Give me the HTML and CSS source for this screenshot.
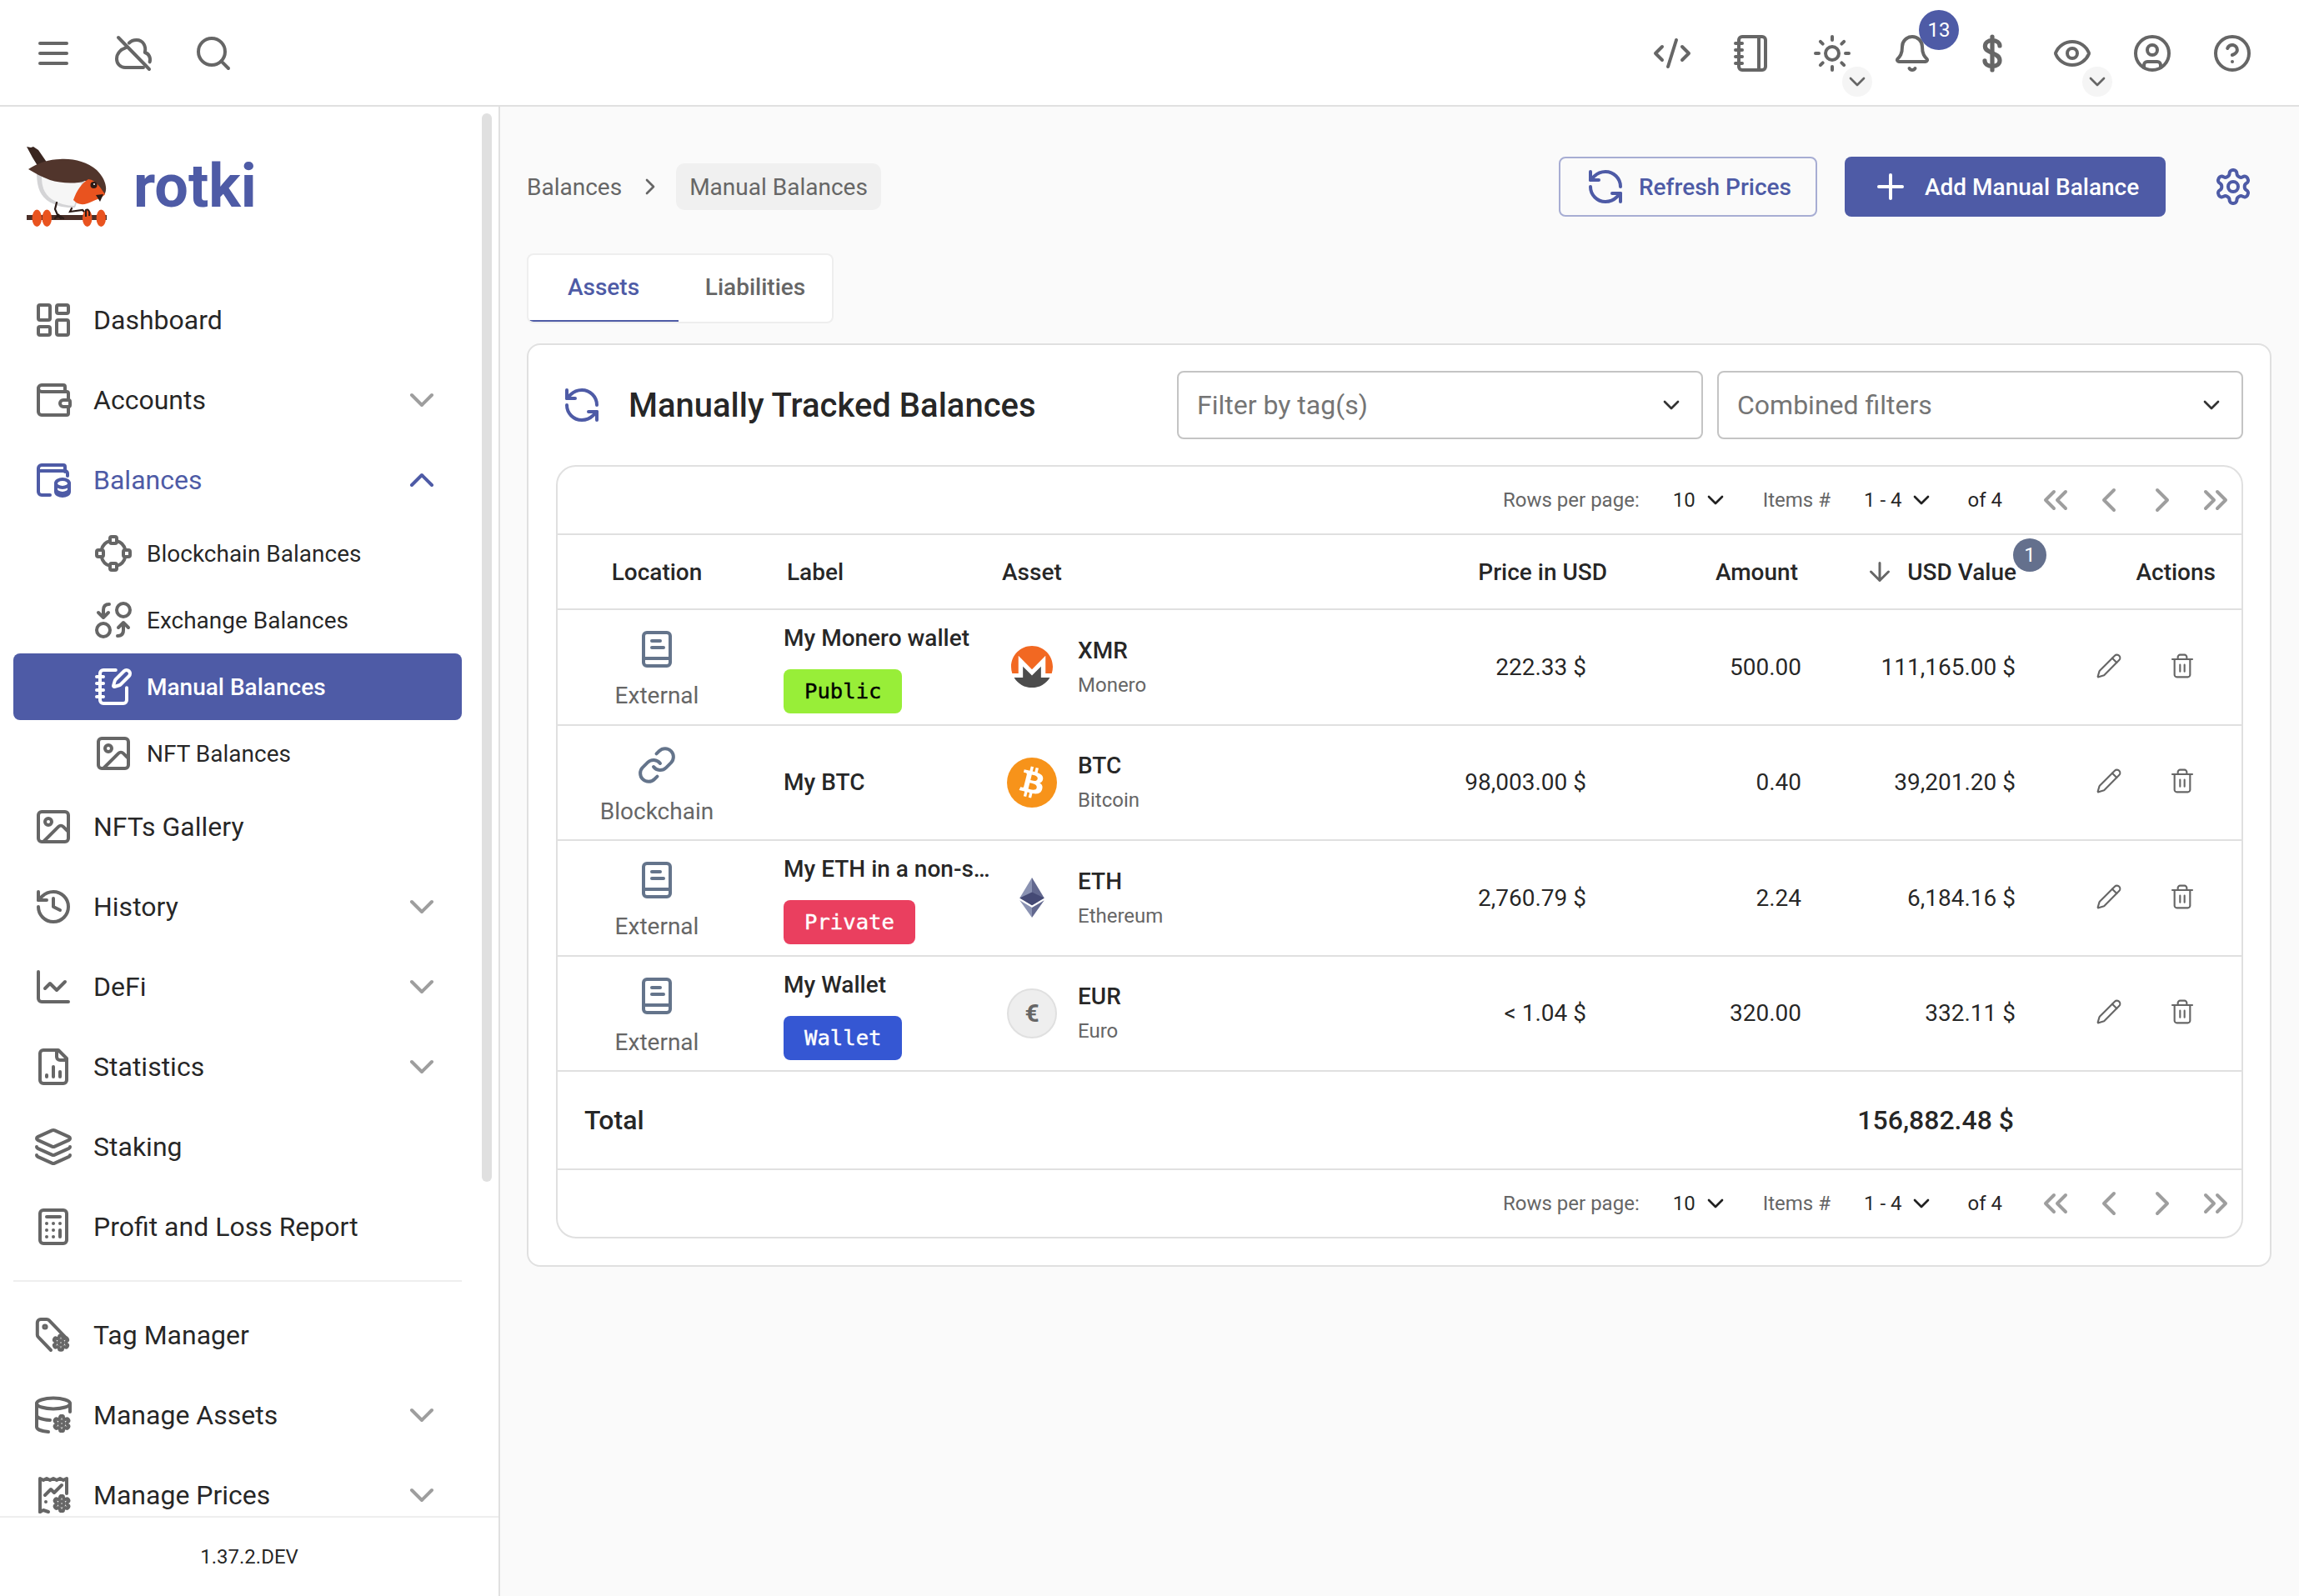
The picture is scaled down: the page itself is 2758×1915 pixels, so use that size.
FILE: index.html
```html
<!DOCTYPE html>
<html lang="en">
<head>
<meta charset="utf-8">
<title>rotki</title>
<link rel="stylesheet" href="styles.css">
</head>
<body>
<svg class="sprite" aria-hidden="true">
<defs>
<symbol id="i-down" viewBox="0 0 24 24"><path d="m6 9 6 6 6-6"/></symbol>
<symbol id="i-up" viewBox="0 0 24 24"><path d="m18 15-6-6-6 6"/></symbol>
<symbol id="i-left" viewBox="0 0 24 24"><path d="m15 18-6-6 6-6"/></symbol>
<symbol id="i-right" viewBox="0 0 24 24"><path d="m9 18 6-6-6-6"/></symbol>
<symbol id="i-dleft" viewBox="0 0 24 24"><path d="m11 17-5-5 5-5"/><path d="m18 17-5-5 5-5"/></symbol>
<symbol id="i-dright" viewBox="0 0 24 24"><path d="m6 17 5-5-5-5"/><path d="m13 17 5-5-5-5"/></symbol>
<symbol id="i-refresh" viewBox="0 0 24 24"><path d="M21 12a9 9 0 0 0-9-9 9.75 9.75 0 0 0-6.74 2.74L3 8"/><path d="M3 3v5h5"/><path d="M3 12a9 9 0 0 0 9 9 9.75 9.75 0 0 0 6.74-2.74L21 16"/><path d="M16 16h5v5"/></symbol>
<symbol id="i-gear" viewBox="0 0 24 24"><path d="M12.22 2h-.44a2 2 0 0 0-2 2v.18a2 2 0 0 1-1 1.73l-.43.25a2 2 0 0 1-2 0l-.15-.08a2 2 0 0 0-2.73.73l-.22.38a2 2 0 0 0 .73 2.73l.15.1a2 2 0 0 1 1 1.72v.51a2 2 0 0 1-1 1.74l-.15.09a2 2 0 0 0-.73 2.73l.22.38a2 2 0 0 0 2.73.73l.15-.08a2 2 0 0 1 2 0l.43.25a2 2 0 0 1 1 1.73V20a2 2 0 0 0 2 2h.44a2 2 0 0 0 2-2v-.18a2 2 0 0 1 1-1.73l.43-.25a2 2 0 0 1 2 0l.15.08a2 2 0 0 0 2.73-.73l.22-.39a2 2 0 0 0-.73-2.73l-.15-.08a2 2 0 0 1-1-1.74v-.5a2 2 0 0 1 1-1.74l.15-.09a2 2 0 0 0 .73-2.73l-.22-.38a2 2 0 0 0-2.73-.73l-.15.08a2 2 0 0 1-2 0l-.43-.25a2 2 0 0 1-1-1.73V4a2 2 0 0 0-2-2z"/><circle cx="12" cy="12" r="3"/></symbol>
<symbol id="i-book" viewBox="0 0 24 24"><path d="M4 20V4a2 2 0 0 1 2-2h12a2 2 0 0 1 2 2v16a2 2 0 0 1-2 2H6a2 2 0 0 1-2-2Z"/><path d="M4 17.5h16"/><path d="M9 7h5"/><path d="M9 11h7"/></symbol>
<symbol id="i-link" viewBox="0 0 24 24"><path d="M10 13a5 5 0 0 0 7.54.54l3-3a5 5 0 0 0-7.07-7.07l-1.72 1.71"/><path d="M14 11a5 5 0 0 0-7.54-.54l-3 3a5 5 0 0 0 7.07 7.07l1.71-1.71"/></symbol>
<symbol id="i-pencil" viewBox="0 0 24 24"><path d="M21.174 6.812a1 1 0 0 0-3.986-3.987L3.842 16.174a2 2 0 0 0-.5.83l-1.321 4.352a.5.5 0 0 0 .623.622l4.353-1.32a2 2 0 0 0 .83-.497z"/><path d="m15 5 4 4"/></symbol>
<symbol id="i-trash" viewBox="0 0 24 24"><path d="M3 6h18"/><path d="M19 6v14c0 1-1 2-2 2H7c-1 0-2-1-2-2V6"/><path d="M8 6V4c0-1 1-2 2-2h4c1 0 2 1 2 2v2"/><path d="M10 11v6"/><path d="M14 11v6"/></symbol>
<symbol id="i-image" viewBox="0 0 24 24"><rect x="3" y="3" width="18" height="18" rx="2"/><circle cx="9" cy="9" r="2"/><path d="m21 15-3.086-3.086a2 2 0 0 0-2.828 0L6 21"/></symbol>
</defs>
</svg>

<header class="topbar">
  <div class="topbar-group">
    <span class="top-btn"><svg class="ico i48" viewBox="0 0 24 24"><path d="M4 6h16"/><path d="M4 12h16"/><path d="M4 18h16"/></svg></span>
    <span class="top-btn"><svg class="ico i48" viewBox="0 0 24 24"><path d="m3 2.5 18.5 19"/><path d="M7.6 8.6C4.4 9.6 2 12 2 15.4c0 3 2.4 5.1 5 5.1h11"/><path d="M21.8 17.2c.8-2.6-.6-5.1-2.9-5.7.9-3.7-1-7.5-5-7.5-1.9 0-3.4.6-4.5 1.8"/></svg></span>
    <span class="top-btn"><svg class="ico i48" viewBox="0 0 24 24"><circle cx="11" cy="11" r="8"/><path d="m21 21-4.3-4.3"/></svg></span>
  </div>
  <div class="topbar-group">
    <span class="top-btn"><svg class="ico i48" viewBox="0 0 24 24"><path d="m18 16 4-4-4-4"/><path d="m6 8-4 4 4 4"/><path d="m14.5 4-5 16"/></svg></span>
    <span class="top-btn"><svg class="ico i48" viewBox="0 0 24 24"><path d="M2 6h4"/><path d="M2 10h4"/><path d="M2 14h4"/><path d="M2 18h4"/><rect x="4" y="2" width="16" height="20" rx="2"/><path d="M16 2v20"/></svg></span>
    <span class="top-btn"><svg class="ico i48" viewBox="0 0 24 24"><circle cx="12" cy="12" r="4"/><path d="M12 2v2"/><path d="M12 20v2"/><path d="m4.93 4.93 1.41 1.41"/><path d="m17.66 17.66 1.41 1.41"/><path d="M2 12h2"/><path d="M20 12h2"/><path d="m6.34 17.66-1.41 1.41"/><path d="m19.07 4.93-1.41 1.41"/></svg><span class="mini-drop"><svg class="ico i32"><use href="#i-down"/></svg></span></span>
    <span class="top-btn"><svg class="ico i48" viewBox="0 0 24 24"><path d="M10.268 21a2 2 0 0 0 3.464 0"/><path d="M3.262 15.326A1 1 0 0 0 4 17h16a1 1 0 0 0 .74-1.673C19.41 13.956 18 12.499 18 8A6 6 0 0 0 6 8c0 4.499-1.411 5.956-2.738 7.326"/></svg><span class="notif-badge">13</span></span>
    <span class="top-btn"><svg class="ico i48 heavy" viewBox="0 0 24 24"><path d="M12 2v20"/><path d="M16.5 7.5c0-2-1.9-3.2-4.5-3.2s-4.3 1.3-4.3 3.4c0 4.6 8.8 3.6 8.8 8.5 0 2.2-1.9 3.5-4.5 3.5s-4.5-1.2-4.5-3.3"/></svg></span>
    <span class="top-btn"><svg class="ico i48" viewBox="0 0 24 24"><path d="M2.062 12.348a1 1 0 0 1 0-.696 10.75 10.75 0 0 1 19.876 0 1 1 0 0 1 0 .696 10.75 10.75 0 0 1-19.876 0"/><circle cx="12" cy="12" r="3"/></svg><span class="mini-drop"><svg class="ico i32"><use href="#i-down"/></svg></span></span>
    <span class="top-btn"><svg class="ico i48" viewBox="0 0 24 24"><circle cx="12" cy="12" r="10"/><circle cx="12" cy="10" r="3"/><path d="M7 20.662V19a2 2 0 0 1 2-2h6a2 2 0 0 1 2 2v1.662"/></svg></span>
    <span class="top-btn"><svg class="ico i48" viewBox="0 0 24 24"><circle cx="12" cy="12" r="10"/><path d="M9.09 9a3 3 0 0 1 5.83 1c0 2-3 3-3 3"/><path d="M12 17h.01"/></svg></span>
  </div>
</header>

<div class="shell">
  <aside class="sidebar">
    <div class="side-scroll">
      <div class="brand">
        <svg class="bird" viewBox="0 0 96 96">
          <path fill="#3a2620" d="M0 0 5 1 8 0 14 4 25 20 15 26 7 13Z"/>
          <path fill="#d4d4d6" d="M12 30C12 44 14 56 24 64 34 71 46 74 58 73L70 40Z"/>
          <path fill="#f6f6f6" d="M18 36C18 46 20 56 30 63 38 68 48 71 57 71L66 44Z"/>
          <path fill="#51352c" d="M2 27C14 19 28 15 40 15 56 14 72 18 84 28 94 38 98 50 93 58 86 50 78 42 70 41 60 45 40 44 28 40 18 36 10 32 2 27Z"/>
          <path fill="#e9531f" d="M56 64C60 52 66 44 74 39 84 40 90 52 94 57 90 62 84 63 78 66 70 70 62 71 56 64Z"/>
          <path fill="#2b1b17" d="M83 58 92 57 88 66Z"/>
          <circle cx="80.5" cy="46" r="4" fill="#2b1b17"/><circle cx="81" cy="45" r="1" fill="#fff"/>
          <rect x="0" y="82" width="96" height="6" fill="#4a2f28"/>
          <g fill="none" stroke="#2b1b17" stroke-width="2.2" stroke-linecap="round"><path d="M36 67 34 75 38 84"/><path d="M34 86 38 82 41 86"/><path d="M38 82 44 86"/><path d="M54 74 52 78 67 76 73 82"/></g>
          <g fill="#e9531f"><ellipse cx="12.3" cy="85.7" rx="5.7" ry="10.3"/><ellipse cx="24.3" cy="85.7" rx="5.7" ry="10.3"/><ellipse cx="72.7" cy="85.7" rx="5.7" ry="10.3"/><ellipse cx="89.3" cy="85.7" rx="5.7" ry="10.3"/></g>
          <path fill="none" stroke="#2b1b17" stroke-width="2" d="M71 84V76C74 74 76 78 75 83"/>
        </svg>
        <span class="brand-name">rotki</span>
      </div>
      <nav class="nav">
        <a class="nav-item"><svg class="ico i48" viewBox="0 0 24 24"><rect x="3" y="3" width="7" height="9" rx="1"/><rect x="14" y="3" width="7" height="5" rx="1"/><rect x="14" y="12" width="7" height="9" rx="1"/><rect x="3" y="16" width="7" height="5" rx="1"/></svg><span class="nav-label">Dashboard</span></a>
        <a class="nav-item"><svg class="ico i48" viewBox="0 0 24 24"><path d="M19 7V4a1 1 0 0 0-1-1H5a2 2 0 0 0 0 4h15a1 1 0 0 1 1 1v4h-3a2 2 0 0 0 0 4h3a1 1 0 0 0 1-1v-2a1 1 0 0 0-1-1"/><path d="M3 5v14a2 2 0 0 0 2 2h15a1 1 0 0 0 1-1v-4"/></svg><span class="nav-label">Accounts</span><svg class="ico i48 caret"><use href="#i-down"/></svg></a>
        <a class="nav-item is-open"><svg class="ico i48" viewBox="0 0 24 24"><path d="M19 7V4a1 1 0 0 0-1-1H5a2 2 0 0 0-2 2v14a2 2 0 0 0 2 2h5"/><path d="M3 6.5h16a1.5 1.5 0 0 1 1.5 1.5v1.5"/><ellipse cx="17.5" cy="14" rx="4" ry="2.5"/><path d="M13.5 14v5c0 1.4 1.8 2.5 4 2.5s4-1.1 4-2.5v-5"/><path d="M13.5 17.5c0 1.4 1.8 2.5 4 2.5s4-1.1 4-2.5"/></svg><span class="nav-label">Balances</span><svg class="ico i48 caret"><use href="#i-up"/></svg></a>
        <a class="nav-sub"><svg class="ico i48" viewBox="0 0 24 24"><rect x="10" y="2" width="4" height="4" rx="1"/><rect x="18" y="10" width="4" height="4" rx="1"/><rect x="10" y="18" width="4" height="4" rx="1"/><rect x="2" y="10" width="4" height="4" rx="1"/><path d="M14 4.5c2.4.6 4.5 2.7 5.2 5.5"/><path d="M19.2 14c-.7 2.8-2.8 4.9-5.2 5.5"/><path d="M10 19.5c-2.4-.6-4.5-2.7-5.2-5.5"/><path d="M4.8 10c.7-2.8 2.8-4.900 5.2-5.500"/></svg><span class="nav-label">Blockchain Balances</span></a>
        <a class="nav-sub"><svg class="ico i48" viewBox="0 0 24 24"><circle cx="18" cy="6" r="4"/><circle cx="6" cy="18" r="4"/><path d="M9.5 2.5C7 2.5 6 4 6 6v4"/><path d="M3 7.5 6 10.5 9 7.5"/><path d="M14.5 21.5c2.500 0 3.500-1.500 3.500-3.500v-4"/><path d="M15 16.5 18 13.5 21 16.5"/></svg><span class="nav-label">Exchange Balances</span></a>
        <a class="nav-sub is-active"><svg class="ico i48" viewBox="0 0 24 24"><path d="M13.4 2H6a2 2 0 0 0-2 2v16a2 2 0 0 0 2 2h12a2 2 0 0 0 2-2v-7.4"/><path d="M2 6h4"/><path d="M2 10h4"/><path d="M2 14h4"/><path d="M2 18h4"/><path d="M21.378 5.626a1 1 0 1 0-3.004-3.004l-5.01 5.012a2 2 0 0 0-.506.854l-.837 2.87a.5.5 0 0 0 .62.62l2.87-.837a2 2 0 0 0 .854-.506z"/></svg><span class="nav-label">Manual Balances</span></a>
        <a class="nav-sub"><svg class="ico i48"><use href="#i-image"/></svg><span class="nav-label">NFT Balances</span></a>
        <a class="nav-item"><svg class="ico i48"><use href="#i-image"/></svg><span class="nav-label">NFTs Gallery</span></a>
        <a class="nav-item"><svg class="ico i48" viewBox="0 0 24 24"><path d="M3 12a9 9 0 1 0 9-9 9.75 9.75 0 0 0-6.74 2.74L3 8"/><path d="M3 3v5h5"/><path d="M12 7v5l4 2"/></svg><span class="nav-label">History</span><svg class="ico i48 caret"><use href="#i-down"/></svg></a>
        <a class="nav-item"><svg class="ico i48" viewBox="0 0 24 24"><path d="M3 3v16a2 2 0 0 0 2 2h16"/><path d="m19 9-5 5-4-4-3 3"/></svg><span class="nav-label">DeFi</span><svg class="ico i48 caret"><use href="#i-down"/></svg></a>
        <a class="nav-item"><svg class="ico i48" viewBox="0 0 24 24"><path d="M15 2H6a2 2 0 0 0-2 2v16a2 2 0 0 0 2 2h12a2 2 0 0 0 2-2V7Z"/><path d="M14 2v4a2 2 0 0 0 2 2h4"/><path d="M8 18v-1"/><path d="M12 18v-6"/><path d="M16 18v-3"/></svg><span class="nav-label">Statistics</span><svg class="ico i48 caret"><use href="#i-down"/></svg></a>
        <a class="nav-item"><svg class="ico i48" viewBox="0 0 24 24"><path d="M12.83 2.18a2 2 0 0 0-1.66 0L2.6 6.08a1 1 0 0 0 0 1.83l8.58 3.91a2 2 0 0 0 1.66 0l8.58-3.9a1 1 0 0 0 0-1.83z"/><path d="M2 12a1 1 0 0 0 .58.91l8.6 3.91a2 2 0 0 0 1.65 0l8.58-3.9A1 1 0 0 0 22 12"/><path d="M2 17a1 1 0 0 0 .58.91l8.6 3.91a2 2 0 0 0 1.65 0l8.58-3.9A1 1 0 0 0 22 17"/></svg><span class="nav-label">Staking</span></a>
        <a class="nav-item"><svg class="ico i48" viewBox="0 0 24 24"><rect x="4" y="2" width="16" height="20" rx="2"/><path d="M8 6h8"/><path d="M16 14v4"/><path d="M16 10h.01"/><path d="M12 10h.01"/><path d="M8 10h.01"/><path d="M12 14h.01"/><path d="M8 14h.01"/><path d="M12 18h.01"/><path d="M8 18h.01"/></svg><span class="nav-label">Profit and Loss Report</span></a>
        <hr class="nav-rule">
        <a class="nav-item"><svg class="ico i48" viewBox="0 0 24 24"><path d="M10.5 21 3 13.2a2 2 0 0 1-.6-1.4V4.5a2 2 0 0 1 2-2h3.6a2 2 0 0 1 1.4.6l10 10.3"/><circle cx="7" cy="7" r=".8"/><g class="mini-gear" transform="translate(11.1 11.1) scale(.45)"><use href="#i-gear" width="24" height="24"/></g></svg><span class="nav-label">Tag Manager</span></a>
        <a class="nav-item"><svg class="ico i48" viewBox="0 0 24 24"><ellipse cx="12" cy="5" rx="10" ry="3.2"/><path d="M2 5v14c0 1.5 3 2.7 7 3"/><path d="M22 5v5"/><path d="M2 12c0 1.5 3 2.7 8 3"/><g class="mini-gear" transform="translate(11.5 11.5) scale(.46)"><use href="#i-gear" width="24" height="24"/></g></svg><span class="nav-label">Manage Assets</span><svg class="ico i48 caret"><use href="#i-down"/></svg></a>
        <a class="nav-item"><svg class="ico i48" viewBox="0 0 24 24"><path d="M4 22V2l2 1 2-1 2 1 2-1 2 1 2-1 2 1 2-1v9"/><path d="M4 22l2-1 3 1"/><path d="m7 12 3.5-3.5 2 2L17 6"/><path d="M7.5 16v.01"/><g class="mini-gear" transform="translate(11.5 11.5) scale(.46)"><use href="#i-gear" width="24" height="24"/></g></svg><span class="nav-label">Manage Prices</span><svg class="ico i48 caret"><use href="#i-down"/></svg></a>
      </nav>
      <span class="side-thumb"></span>
    </div>
    <footer class="side-foot">1.37.2.DEV</footer>
  </aside>

  <main class="main">
    <div class="crumb-row">
      <div class="crumbs">
        <span>Balances</span>
        <svg class="ico i32"><use href="#i-right"/></svg>
        <span class="crumb-chip">Manual Balances</span>
      </div>
      <div class="crumb-actions">
        <button class="btn btn-outline"><svg class="ico i48"><use href="#i-refresh"/></svg>Refresh Prices</button>
        <button class="btn btn-solid"><svg class="ico i48" viewBox="0 0 24 24"><path d="M5 12h14"/><path d="M12 5v14"/></svg>Add Manual Balance</button>
        <span class="gear-btn"><svg class="ico i48"><use href="#i-gear"/></svg></span>
      </div>
    </div>

    <div class="tabs">
      <span class="tab is-current">Assets</span>
      <span class="tab">Liabilities</span>
    </div>

    <section class="card">
      <div class="card-head">
        <div class="card-title"><svg class="ico i48"><use href="#i-refresh"/></svg><h1>Manually Tracked Balances</h1></div>
        <div class="filters">
          <div class="select"><span>Filter by tag(s)</span><svg class="ico i32"><use href="#i-down"/></svg></div>
          <div class="select"><span>Combined filters</span><svg class="ico i32"><use href="#i-down"/></svg></div>
        </div>
      </div>

      <div class="table-box">
        <div class="pager">
          <span class="pager-label rows-label">Rows per page:</span>
          <span class="pager-val rows"><span>10</span><svg class="ico i32"><use href="#i-down"/></svg></span>
          <span class="pager-label items">Items #</span>
          <span class="pager-val range"><span>1 - 4</span><svg class="ico i32"><use href="#i-down"/></svg></span>
          <span class="pager-of">of 4</span>
          <span class="pager-nav"><svg class="ico i48"><use href="#i-dleft"/></svg><svg class="ico i48"><use href="#i-left"/></svg><svg class="ico i48"><use href="#i-right"/></svg><svg class="ico i48"><use href="#i-dright"/></svg></span>
        </div>
        <table class="grid">
          <colgroup><col class="c-loc"><col class="c-label"><col class="c-asset"><col class="c-price"><col class="c-amount"><col class="c-value"><col class="c-actions"></colgroup>
          <thead>
            <tr>
              <th class="h-loc">Location</th>
              <th class="h-label">Label</th>
              <th class="h-asset">Asset</th>
              <th class="h-price">Price in USD</th>
              <th class="h-amount">Amount</th>
              <th class="h-value"><span class="sort-wrap"><svg class="ico i36" viewBox="0 0 36 36"><path d="M18 7.5v21M28.5 18 18 28.5 7.5 18"/></svg>USD Value<span class="sort-badge">1</span></span></th>
              <th class="h-actions">Actions</th>
            </tr>
          </thead>
          <tbody>
            <tr>
              <td class="loc"><svg class="ico i48 slate"><use href="#i-book"/></svg><span>External</span></td>
              <td class="label"><div class="label-name">My Monero wallet</div><span class="tag tag-public">Public</span></td>
              <td><div class="asset"><span class="asset-ico"><svg class="coin-xmr" viewBox="0 0 24 24"><path fill="#f26822" d="M12 0C5.373 0 0 5.373 0 12c0 1.325.215 2.6.612 3.791h3.588V5.698L12 13.5l7.8-7.802v10.093h3.588A12 12 0 0 0 24 12c0-6.627-5.373-12-12-12z"/><path fill="#4c4c4c" d="M10.207 15.29 6.8 11.883v6.346H1.7a12 12 0 0 0 20.6 0h-5.1v-6.346l-3.407 3.407L12 17.083z"/></svg></span><div><div class="asset-sym">XMR</div><div class="asset-name">Monero</div></div></div></td>
              <td class="num">222.33 $</td><td class="num">500.00</td><td class="num">111,165.00 $</td>
              <td class="acts"><svg class="ico i32 thin"><use href="#i-pencil"/></svg><svg class="ico i32 thin"><use href="#i-trash"/></svg></td>
            </tr>
            <tr>
              <td class="loc"><svg class="ico i48 slate"><use href="#i-link"/></svg><span>Blockchain</span></td>
              <td class="label"><div class="label-name solo">My BTC</div></td>
              <td><div class="asset"><span class="asset-ico"><svg class="coin" viewBox="0 0 64 64"><circle cx="32" cy="32" r="32" fill="#f7931a"/><path fill="#fff" d="M46.103 27.444c.637-4.258-2.605-6.547-7.038-8.074l1.438-5.768-3.511-.875-1.4 5.616c-.923-.23-1.871-.447-2.813-.662l1.41-5.653-3.509-.875-1.439 5.766c-.764-.174-1.514-.346-2.242-.527l.004-.018-4.842-1.209-.934 3.75s2.605.597 2.55.634c1.422.355 1.679 1.296 1.636 2.042l-1.638 6.571c.098.025.225.061.365.117l-.371-.092-2.296 9.205c-.174.432-.615 1.08-1.609.834.035.051-2.552-.637-2.552-.637l-1.743 4.019 4.569 1.139c.85.213 1.683.436 2.503.646l-1.453 5.834 3.507.875 1.439-5.772c.958.26 1.888.5 2.798.726l-1.434 5.745 3.511.875 1.453-5.823c5.987 1.133 10.489.676 12.384-4.739 1.527-4.36-.076-6.875-3.226-8.515 2.294-.529 4.022-2.038 4.483-5.155zm-8.022 11.249c-1.085 4.36-8.426 2.003-10.806 1.412l1.928-7.729c2.38.594 10.012 1.77 8.878 6.317zm1.086-11.312c-.99 3.966-7.1 1.951-9.082 1.457l1.748-7.01c1.982.494 8.365 1.416 7.334 5.553z"/></svg></span><div><div class="asset-sym">BTC</div><div class="asset-name">Bitcoin</div></div></div></td>
              <td class="num">98,003.00 $</td><td class="num">0.40</td><td class="num">39,201.20 $</td>
              <td class="acts"><svg class="ico i32 thin"><use href="#i-pencil"/></svg><svg class="ico i32 thin"><use href="#i-trash"/></svg></td>
            </tr>
            <tr>
              <td class="loc"><svg class="ico i48 slate"><use href="#i-book"/></svg><span>External</span></td>
              <td class="label"><div class="label-name">My ETH in a non-s…</div><span class="tag tag-private">Private</span></td>
              <td><div class="asset"><span class="asset-ico"><svg class="coin-eth" viewBox="0 0 256 417"><polygon fill="#8a92b2" points="128,0 0,212 128,288"/><polygon fill="#62688f" points="128,0 256,212 128,288"/><polygon fill="#454a75" points="128,153 0,212 128,288 256,212"/><polygon fill="#8a92b2" points="0,236 128,417 128,312"/><polygon fill="#62688f" points="256,236 128,417 128,312"/></svg></span><div><div class="asset-sym">ETH</div><div class="asset-name">Ethereum</div></div></div></td>
              <td class="num">2,760.79 $</td><td class="num">2.24</td><td class="num">6,184.16 $</td>
              <td class="acts"><svg class="ico i32 thin"><use href="#i-pencil"/></svg><svg class="ico i32 thin"><use href="#i-trash"/></svg></td>
            </tr>
            <tr>
              <td class="loc"><svg class="ico i48 slate"><use href="#i-book"/></svg><span>External</span></td>
              <td class="label"><div class="label-name">My Wallet</div><span class="tag tag-wallet">Wallet</span></td>
              <td><div class="asset"><span class="asset-ico"><span class="coin-eur">€</span></span><div><div class="asset-sym">EUR</div><div class="asset-name">Euro</div></div></div></td>
              <td class="num">&lt; 1.04 $</td><td class="num">320.00</td><td class="num">332.11 $</td>
              <td class="acts"><svg class="ico i32 thin"><use href="#i-pencil"/></svg><svg class="ico i32 thin"><use href="#i-trash"/></svg></td>
            </tr>
          </tbody>
          <tfoot>
            <tr>
              <td colspan="5" class="total-label">Total</td>
              <td class="total-value">156,882.48 $</td>
              <td></td>
            </tr>
          </tfoot>
        </table>
        <div class="pager pager-bottom">
          <span class="pager-label rows-label">Rows per page:</span>
          <span class="pager-val rows"><span>10</span><svg class="ico i32"><use href="#i-down"/></svg></span>
          <span class="pager-label items">Items #</span>
          <span class="pager-val range"><span>1 - 4</span><svg class="ico i32"><use href="#i-down"/></svg></span>
          <span class="pager-of">of 4</span>
          <span class="pager-nav"><svg class="ico i48"><use href="#i-dleft"/></svg><svg class="ico i48"><use href="#i-left"/></svg><svg class="ico i48"><use href="#i-right"/></svg><svg class="ico i48"><use href="#i-dright"/></svg></span>
        </div>
      </div>
    </section>
  </main>
</div>
</body>
</html>
```
FILE: styles.css
```css
* { box-sizing: border-box; }
html, body { margin: 0; height: 100%; }
body {
  width: 2758px; height: 1915px; overflow: hidden;
  font-family: Roboto, "Liberation Sans", sans-serif;
  color: rgba(0,0,0,.87); background: #fafafa;
  display: flex; flex-direction: column;
}
.sprite { width: 0; height: 0; position: absolute; }
.ico { fill: none; stroke: currentColor; stroke-width: 2; stroke-linecap: round; stroke-linejoin: round; flex: none; display: block; }
.i48 { width: 48px; height: 48px; }
.i36 { width: 36px; height: 36px; stroke-width: 3; }
.i32 { width: 32px; height: 32px; }
.thin { stroke-width: 1.6; }
.mini-gear { stroke-width: 4.4; }

/* top bar */
.topbar {
  height: 128px; flex: none; background: #fff; border-bottom: 2px solid #e0e0e0;
  display: flex; justify-content: space-between; align-items: center;
  padding: 2px 32px 0 16px; color: #666;
}
.topbar-group { display: flex; }
.top-btn { width: 96px; height: 96px; display: flex; align-items: center; justify-content: center; position: relative; }
.heavy { stroke-width: 2.6; }
.mini-drop {
  position: absolute; left: 60px; top: 64px; width: 36px; height: 36px; border-radius: 50%;
  background: #f5f5f5; display: flex; align-items: center; justify-content: center;
}
.notif-badge {
  position: absolute; left: 56px; top: -4px; width: 48px; height: 48px; border-radius: 50%;
  background: #4e5ba6; color: #fff; font-size: 24px; display: flex; align-items: center; justify-content: center;
}

/* shell */
.shell { flex: 1; display: flex; min-height: 0; }
.sidebar { width: 600px; flex: none; background: #fff; border-right: 2px solid #e0e0e0; display: flex; flex-direction: column; }
.side-scroll { flex: 1; min-height: 0; overflow: hidden; position: relative; }
.side-thumb { position: absolute; left: 578px; top: 8px; width: 12px; height: 1282px; border-radius: 6px; background: #e0e0e0; }
.brand { height: 208px; padding: 48px 0 0 32px; display: flex; align-items: flex-start; }
.bird { width: 96px; height: 96px; flex: none; }
.brand-name { margin: 6px 0 0 32px; font-size: 72px; line-height: 84px; font-weight: 700; color: #4e5ba6; }
.nav { padding: 0 44px 0 16px; }
.nav-item { height: 96px; display: flex; align-items: center; padding: 0 24px; color: rgba(0,0,0,.87); }
.nav-item > .ico:first-child { color: #666; margin-right: 24px; }
.nav-label { font-size: 32px; }
.caret { margin-left: auto; color: #9e9e9e; }
.nav-item.is-open { color: #4e5ba6; }
.nav-item.is-open > .ico:first-child, .is-open .caret { color: #4e5ba6; }
.nav-sub { height: 80px; display: flex; align-items: center; padding-left: 96px; border-radius: 8px; }
.nav-sub > .ico { color: #666; margin-right: 16px; }
.nav-sub .nav-label { font-size: 28px; }
.nav-sub.is-active { background: #4e5ba6; color: #fff; }
.nav-sub.is-active .ico { color: #fff; }
.nav-sub.is-active .nav-label { font-weight: 500; }
.nav-rule { border: 0; border-top: 2px solid #eee; margin: 16px 0; }
.side-foot { height: 96px; flex: none; border-top: 2px solid #eee; background: #fff; display: flex; align-items: center; justify-content: center; font-size: 24px; }

/* main */
.main { flex: 1; min-width: 0; padding: 60px 32px 0 32px; }
.crumb-row { display: flex; justify-content: space-between; align-items: center; height: 72px; }
.crumbs { display: flex; align-items: center; font-size: 28px; color: #666; }
.crumbs .ico { margin: 0 15px 0 18px; }
.crumb-chip { height: 56px; padding: 0 16px; background: #f0f0f0; border-radius: 10px; display: flex; align-items: center; }
.crumb-actions { display: flex; align-items: center; }
.btn { height: 72px; border-radius: 8px; font: 500 28px Roboto, sans-serif; display: flex; align-items: center; }
.btn-outline { width: 310px; padding: 0 0 0 30px; margin-right: 33px; background: transparent; border: 2px solid #a7add3; color: #4e5ba6; }
.btn-outline .ico { margin-right: 16px; }
.btn-solid { width: 385px; padding: 0 0 0 31px; border: 0; background: #4e5ba6; color: #fff; }
.btn-solid .ico { margin-right: 17px; }
.gear-btn { width: 48px; margin: 0 23px 0 57px; color: #4e5ba6; }

.tabs { margin-top: 44px; width: 368px; height: 84px; display: flex; background: #fff; border: 2px solid #eee; border-radius: 8px; overflow: hidden; }
.tab { height: 82px; font-size: 28px; font-weight: 500; color: #666; display: flex; align-items: center; justify-content: center; padding-bottom: 6px; }
.tab:first-child { width: 180px; }
.tab:last-child { width: 184px; }
.tab.is-current { color: #4e5ba6; border-bottom: 4px solid #4e5ba6; padding-bottom: 2px; }

.card { margin-top: 24px; width: 2093px; height: 1108px; background: #fff; border: 2px solid #e0e0e0; border-radius: 16px; padding: 0 32px 0 33px; }
.card-head { height: 144px; display: flex; justify-content: space-between; align-items: center; }
.card-title { display: flex; align-items: center; margin-left: 7px; color: #4e5ba6; }
.card-title h1 { margin: 0 0 0 32px; font-size: 40px; font-weight: 500; color: rgba(0,0,0,.87); }
.filters { display: flex; gap: 17px; }
.select { width: 631px; height: 82px; border: 2px solid #c4c4c4; border-radius: 8px; padding: 0 22px; display: flex; justify-content: space-between; align-items: center; font-size: 32px; color: #757575; }
.select .ico { color: #333; margin-right: -2px; }

.table-box { width: 2024px; height: 928px; border: 2px solid #e0e0e0; border-radius: 24px; overflow: hidden; display: flex; flex-direction: column; }
.pager { height: 80px; flex: none; display: flex; align-items: center; font-size: 24px; }
.pager-label { color: #666; }
.rows-label { margin-left: 1134px; }
.pager-val { display: flex; align-items: center; }
.pager-val .ico { margin-left: 8px; }
.rows { margin-left: 40px; }
.items { margin-left: 41px; }
.range { margin-left: 40px; }
.pager-of { margin-left: 39px; }
.pager-nav { display: flex; margin-left: 40px; color: #9e9e9e; }
.pager-nav .ico { margin-right: 16px; }
.pager-nav .ico:last-child { margin-right: 0; }

.grid { width: 2020px; border-collapse: separate; border-spacing: 0; table-layout: fixed; }
.c-loc { width: 240px; } .c-label { width: 280px; } .c-asset { width: 420px; } .c-price { width: 325px; }
.c-amount { width: 258px; } .c-value { width: 257px; } .c-actions { width: 240px; }
.grid th { height: 92px; font-size: 28px; font-weight: 500; text-align: left; border-top: 2px solid #e0e0e0; border-bottom: 2px solid #e0e0e0; padding: 0; vertical-align: middle; }
.grid td { height: 138.5px; border-bottom: 2px solid #e0e0e0; padding: 0; font-size: 28px; }
.grid .h-loc { text-align: center; padding-right: 2px; }
.grid .h-label { padding-left: 35px; }
.grid .h-asset { padding-left: 13px; }
.grid .h-price { text-align: right; padding-right: 6px; }
.grid .h-amount { text-align: right; padding-right: 35px; }
.grid .h-value { text-align: right; padding-right: 30px; }
.grid .h-actions { text-align: right; padding-right: 31px; }
.sort-wrap { position: relative; display: inline-flex; align-items: center; vertical-align: middle; }
.sort-wrap .ico { color: #666; margin-right: 15px; }
.sort-badge { position: absolute; right: -36px; top: -22px; width: 40px; height: 40px; border-radius: 50%; background: #64708d; color: #fff; font-size: 24px; font-weight: 400; display: flex; align-items: center; justify-content: center; }
.grid .loc { text-align: center; color: #666; vertical-align: top; padding: 23px 2px 0 0; }
.loc .ico { margin: 0 auto 15px; }
.slate { color: #64748b; }
.loc span { font-size: 28px; line-height: 34px; display: block; }
.grid .label { padding-left: 31px; vertical-align: top; }
.label-name { font-size: 28px; font-weight: 500; line-height: 36px; margin-top: 16px; white-space: nowrap; }
.label-name.solo { margin-top: 50px; }
.tag { display: inline-block; margin-top: 19px; height: 53px; line-height: 53px; padding: 0 25px; border-radius: 8px; font-family: "DejaVu Sans Mono", monospace; font-size: 25.6px; -webkit-text-stroke: .4px currentColor; }
.tag-public { background: #98ee38; color: #000; }
.tag-private { background: #ea3f5f; color: #fff; }
.tag-wallet { background: #3557d3; color: #fff; }
.asset { display: flex; align-items: center; padding-left: 19px; }
.asset-ico { width: 60px; height: 60px; margin-right: 25px; display: flex; align-items: center; justify-content: center; flex: none; }
.coin { width: 60px; height: 60px; display: block; }
.coin-xmr { width: 50px; height: 50px; display: block; }
.coin-eth { width: 30px; height: 48px; display: block; }
.coin-eur { width: 60px; height: 60px; border-radius: 50%; background: #eee; border: 2px solid #e0e0e0; color: #666; font-size: 30px; font-weight: 700; display: flex; align-items: center; justify-content: center; }
.asset-sym { font-size: 28px; font-weight: 500; line-height: 40px; }
.asset-name { font-size: 24px; color: #666; line-height: 36px; margin-top: 3px; }
.grid .num { text-align: right; padding-right: 31px; }
.grid .acts { padding-left: 65px; }
.acts .ico { display: inline-block; color: #666; margin: 0 56px 4px 0; vertical-align: middle; }
.acts .ico:last-child { margin-right: 0; }
.grid tfoot td { height: 118px; font-size: 32px; font-weight: 500; }
.grid .total-label { padding-left: 32px; }
.grid .total-value { text-align: right; padding-right: 33px; }
```
